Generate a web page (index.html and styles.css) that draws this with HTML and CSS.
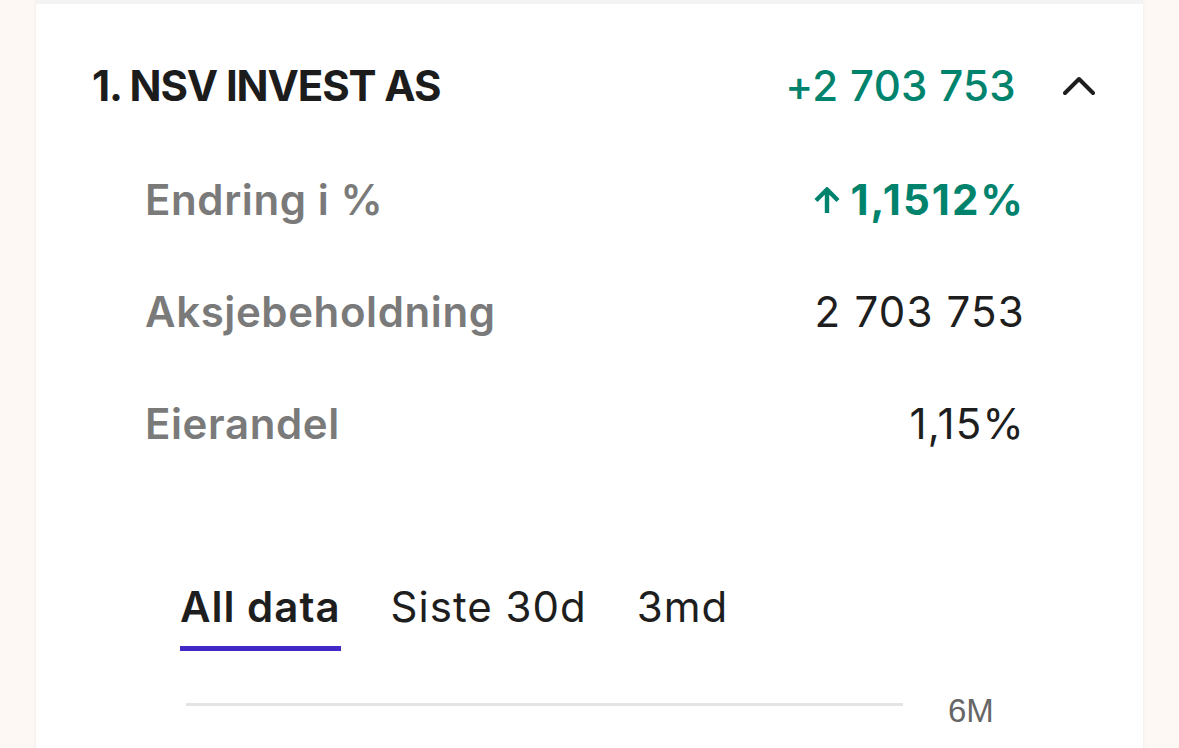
FILE: index.html
```html
<!DOCTYPE html>
<html lang="no">
<head>
    <meta charset="UTF-8">
    <meta name="viewport" content="width=device-width, initial-scale=1.0">
    <title>Aksjonærer</title>
    <link rel="stylesheet" href="styles.css">
</head>
<body>
    <div class="page">
        <div class="card">
            <div class="card-top"></div>
            <div class="card-body">
                <div class="header">
                    <h2 class="title">1. NSV INVEST AS</h2>
                    <span class="amount">+2 703 753</span>
                    <button class="toggle" aria-label="Skjul">
                        <svg width="32" height="20" viewBox="0 0 32 20">
                            <path d="M2 17 L16 3 L30 17" fill="none" stroke="#1e1e1e" stroke-width="4" stroke-linecap="round" stroke-linejoin="round"/>
                        </svg>
                    </button>
                </div>

                <div class="details">
                    <div class="row">
                        <span class="label">Endring i %</span>
                        <span class="value positive">
                            <svg class="arrow" width="26" height="27" viewBox="0 0 26 27">
                                <path d="M13 26 V3 M2 13.5 L13 2.5 L24 13.5" fill="none" stroke="#00836c" stroke-width="4.4" stroke-linejoin="miter"/>
                            </svg>1,1512%
                        </span>
                    </div>
                    <div class="row">
                        <span class="label">Aksjebeholdning</span>
                        <span class="value">2 703 753</span>
                    </div>
                    <div class="row">
                        <span class="label">Eierandel</span>
                        <span class="value">1,15%</span>
                    </div>
                </div>

                <div class="tabs">
                    <div class="tab active">All data</div>
                    <div class="tab">Siste 30d</div>
                    <div class="tab">3md</div>
                </div>

                <div class="chart">
                    <div class="chart-line"></div>
                    <span class="chart-label">6M</span>
                </div>
            </div>
        </div>
    </div>
</body>
</html>
```

FILE: styles.css
```css
body {
    margin: 0;
    padding: 0;
    background: #fdf8f4;
    font-family: Inter, "Noto Sans", sans-serif;
    color: #1e1e1e;
    overflow: hidden;
}
.page {
    height: 748px;
    padding-left: 36px;
}
.card {
    width: 1107px;
    min-height: 900px;
    background: white;
    box-shadow: 0 0 4px rgba(0, 0, 0, 0.06);
}
.card-top {
    height: 4px;
    background: #f3f3f3;
}
.card-body {
    padding: 57px 48px 0 56px;
}
.header {
    display: flex;
    align-items: center;
    height: 50px;
}
.title {
    flex: 1;
    margin: 0;
    font-size: 42px;
    line-height: 50px;
    font-weight: 700;
    letter-spacing: -1.1px;
    color: #1c1c1c;
}
.amount {
    font-size: 42px;
    line-height: 50px;
    font-weight: 500;
    letter-spacing: 0.3px;
    color: #00836c;
    margin-right: 47px;
}
.toggle {
    display: flex;
    padding: 0;
    border: none;
    background: none;
    cursor: pointer;
}
.details {
    display: flex;
    flex-direction: column;
    gap: 62px;
    margin-top: 64px;
    padding: 0 72px 0 53px;
}
.row {
    display: flex;
    justify-content: space-between;
    align-items: center;
    height: 50px;
}
.label {
    font-size: 42px;
    line-height: 50px;
    font-weight: 600;
    letter-spacing: 0.6px;
    color: #7a7a7a;
}
.value {
    display: flex;
    align-items: center;
    font-size: 42px;
    line-height: 50px;
    font-weight: 400;
    letter-spacing: 1.2px;
    margin-right: -2px;
}
.value.positive {
    font-weight: 700;
    letter-spacing: 2px;
    color: #00836c;
}
.arrow {
    margin-right: 10px;
}
.tabs {
    display: flex;
    gap: 50px;
    margin-top: 133px;
    padding-left: 88px;
}
.tab {
    font-size: 42px;
    line-height: 50px;
    letter-spacing: 1px;
    padding-bottom: 14px;
    border-bottom: 5px solid transparent;
    color: #1e1e1e;
}
.tab.active {
    font-weight: 600;
    border-bottom-color: #4328c8;
}
.chart {
    display: flex;
    align-items: flex-start;
    gap: 45px;
    margin-top: 43px;
    padding-left: 94px;
}
.chart-line {
    width: 717px;
    height: 3px;
    margin-top: 9px;
    background: #e4e4e4;
}
.chart-label {
    font-family: "Liberation Sans", Arial, sans-serif;
    font-size: 33px;
    line-height: 33px;
    color: #666;
}
```
